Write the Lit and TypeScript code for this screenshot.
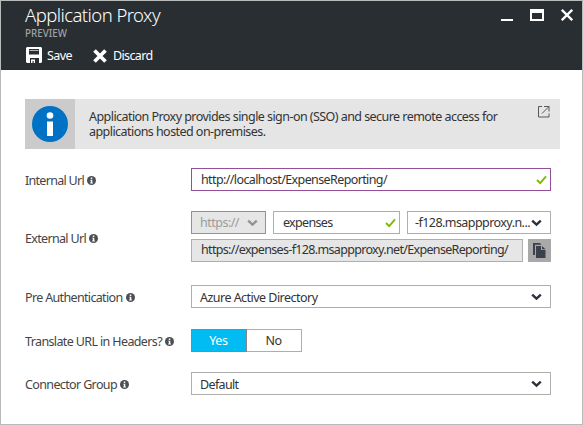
import { LitElement, html, css } from 'lit';
import { customElement, property } from 'lit/decorators.js';

/** Text whose tracking is adjusted so that its unwrapped length is a given width. */
@customElement('fit-text')
class FitText extends LitElement {
  @property({ type: Number }) width = 0;
  @property() text = '';
  @property({ type: Boolean, reflect: true }) wrap = false;

  static styles = css`
    :host { display: block; flex: none; }
    span { display: inline-block; white-space: pre; }
    :host([wrap]) span.fitted { white-space: normal; }
  `;

  firstUpdated() {
    const span = this.renderRoot.querySelector('span') as HTMLElement;
    const natural = span.getBoundingClientRect().width;
    const spacing = (this.width - natural) / this.text.length;
    span.style.letterSpacing = `${spacing.toFixed(3)}px`;
    span.classList.add('fitted');
  }

  render() {
    return html`<span>${this.text}</span>`;
  }
}

const t = (text: string, width: number, wrap = false) =>
  html`<fit-text .text=${text} .width=${width} .wrap=${wrap}></fit-text>`;

const chevron = html`<svg class="chevron" width="11" height="8" viewBox="0 0 11 8">
  <path d="M1.2 1.6 5.5 5.6 9.8 1.6" fill="none" stroke="currentColor" stroke-width="2.4" />
</svg>`;

const check = html`<svg class="check" width="11" height="10" viewBox="0 0 11 10">
  <path d="M1 5 4.2 8.2 10 1.3" fill="none" stroke="#7fba00" stroke-width="1.9" />
</svg>`;

const hint = html`<svg class="hint" width="9" height="9" viewBox="0 0 9 9">
  <circle cx="4.5" cy="4.5" r="4.5" fill="#4c4f54" />
  <path d="M3.8 1.5h1.5v1.4H3.8zM3.3 3.7h2v2.9h.6v.8H3.2v-.8h.6V4.5h-.5z" fill="#fff" />
</svg>`;

@customElement('app-root')
class AppRoot extends LitElement {
  static styles = css`
    :host {
      display: block;
      font: 12.5px/15px "Noto Sans", "Open Sans", sans-serif;
      color: #333;
    }
    * { box-sizing: border-box; }
    svg { display: block; flex: none; }
    .blade {
      width: 583px; height: 425px;
      border: 1px solid #b9bbbb;
      background: #fff;
      overflow: hidden;
    }
    header {
      height: 69px;
      background: #292e32;
      color: #fff;
      display: flex;
      justify-content: space-between;
      padding: 2px 9px 0 24px;
    }
    .title { font-size: 18.5px; line-height: 24px; font-weight: 300; }
    .sub { font-size: 9.8px; line-height: 12px; font-weight: 500; color: #a0a2a4; margin-top: 1px; }
    .commands { display: flex; align-items: center; margin-top: 7px; height: 17px; }
    .commands .save { margin: 0 4px 0 1px; }
    .commands .discard { margin: 0 6px 0 21px; }
    .window { display: flex; align-items: flex-start; padding-top: 6px; }
    .max { margin: 0 17px; }
    .banner {
      display: flex;
      width: 535px; height: 50px;
      margin: 29px 0 0 24px;
      background: #e5e5e5;
    }
    .badge {
      width: 50px;
      background: #cbcbcb;
      display: grid;
      place-items: center;
    }
    .message { padding: 10px 0 0 14px; margin-right: 19px; width: 443px; }
    .message fit-text { width: 429px; }
    .open { margin: 7px 0 0 1px; }
    .row { display: flex; margin-left: 24px; }
    .label {
      width: 166px;
      display: flex;
      align-items: center;
      color: #444;
      height: 23px;
      padding-top: 2px;
    }
    .hint { margin: 0 0 1px 3px; }
    .field {
      height: 23px;
      border: 1px solid #aeaeae;
      background: #fff;
      display: flex;
      align-items: center;
      justify-content: space-between;
      padding: 0 8px;
    }
    .wide { width: 360px; }
    .input { padding: 0 3px 1px 9px; }
    .valid { border-color: #954f99; }
    .internal { margin-top: 19px; }
    .external { margin-top: 20px; }
    .external .label { height: 51px; padding-top: 4px; }
    .stack { display: flex; flex-direction: column; gap: 5px; }
    .line { display: flex; }
    .scheme { width: 75px; background: #e6e6e6; border-color: #929292; color: #9b9b9b; }
    .name { width: 127px; margin: 0 7px; padding: 0 3px 1px 9px; }
    .check { margin-top: 2px; }
    .suffix { width: 144px; padding-left: 7px; }
    .readonly { width: 332px; background: #e6e6e6; margin-right: 5px; padding-bottom: 2px; }
    .copy { width: 23px; height: 23px; background: #a9a9a9; display: grid; place-items: center; }
    .chevron { color: #2b303a; }
    .scheme .chevron { color: #929292; margin-right: -1px; }
    .auth { margin-top: 23px; }
    .auth .field, .group .field { padding-top: 1px; }
    .translate { margin-top: 21px; }
    .group { margin-top: 20px; }
    .toggle { display: flex; }
    .toggle > div {
      height: 23px;
      border: 1px solid #aeaeae;
      display: flex;
      align-items: center;
      justify-content: center;
    }
    .toggle .on { width: 56px; background: #00bcf2; border-color: #858585; color: #fff; padding-right: 1px; }
    .toggle .off { width: 55px; border-left: 0; padding-right: 1px; }
  `;

  render() {
    return html`
      <div class="blade">
        <header>
          <div>
            <div class="title">${t('Application Proxy', 135)}</div>
            <div class="sub">${t('PREVIEW', 42)}</div>
            <div class="commands">
              <svg class="save" width="17" height="17" viewBox="0 0 17 17">
                <path fill="#fff" fill-rule="evenodd"
                  d="M1 0h14l1 1v14l-1 1h-2v-5H4v5H1l-1-1V1zM3 2v5.500h10V2zM5 12.500h4V16H7.700v-2H6.500v2H5z" />
                <path d="M3.500 3.500h9" stroke="#b8babb" stroke-width="1" />
              </svg>
              ${t('Save', 25)}
              <svg class="discard" width="14" height="14" viewBox="0 0 14 14">
                <path d="M1.500 1.500 12.500 12.500M12.500 1.500 1.500 12.500" stroke="#fff" stroke-width="3.700" />
              </svg>
              ${t('Discard', 39.5)}
            </div>
          </div>
          <div class="window">
            <svg width="12" height="12" viewBox="0 0 12 12"><path d="M0 10h12v2H0z" fill="#fff" /></svg>
            <svg class="max" width="14" height="12" viewBox="0 0 14 12">
              <path d="M0 0h14v12H0zM2 4v6h10V4z" fill="#fff" fill-rule="evenodd" />
            </svg>
            <svg width="12" height="12" viewBox="0 0 12 12">
              <path d="M.8.8 11.200 11.200M11.200.8.8 11.200" stroke="#fff" stroke-width="2.300" />
            </svg>
          </div>
        </header>

        <div class="banner">
          <div class="badge">
            <svg width="36" height="36" viewBox="0 0 36 36">
              <circle cx="18" cy="18" r="18" fill="#0072c6" />
              <circle cx="18" cy="9.500" r="3.300" fill="#fff" />
              <path d="M15 15.500h6V30h-6z" fill="#fff" />
            </svg>
          </div>
          <div class="message">
            ${t('Application Proxy provides single sign-on (SSO) and secure remote access for applications hosted on-premises.', 587.5, true)}
          </div>
          <svg class="open" width="12" height="12" viewBox="0 0 12 12">
            <path d="M4 .5H.5v10.500h10.500V7.500M6 .5h5v5M11 .5 4 7.500" fill="none" stroke="#55585c" />
          </svg>
        </div>

        <div class="row internal">
          <div class="label">${t('Internal Url', 59)}${hint}</div>
          <div class="field input wide valid">${t('http://localhost/ExpenseReporting/', 186)}${check}</div>
        </div>

        <div class="row external">
          <div class="label">${t('External Url', 61)}${hint}</div>
          <div class="stack">
            <div class="line">
              <div class="field scheme">${t('https://', 39)}${chevron}</div>
              <div class="field name">${t('expenses', 49.5)}${check}</div>
              <div class="field suffix">${t('-f128.msappproxy.n...', 115)}${chevron}</div>
            </div>
            <div class="line">
              <div class="field input readonly">${t('https://expenses-f128.msappproxy.net/ExpenseReporting/', 307)}</div>
              <div class="copy">
                <svg width="13" height="15" viewBox="0 0 13 15">
                  <path d="M0 0h7l1.500 1.800H2V12H0z" fill="#3b414c" />
                  <path d="M3 3h5v4h4.500v8H3zM9 3l3.500 3.200H9z" fill="#3b414c" />
                </svg>
              </div>
            </div>
          </div>
        </div>

        <div class="row auth">
          <div class="label">${t('Pre Authentication', 97.5)}${hint}</div>
          <div class="field wide">${t('Azure Active Directory', 117.5)}${chevron}</div>
        </div>

        <div class="row translate">
          <div class="label">${t('Translate URL in Headers?', 137)}${hint}</div>
          <div class="toggle">
            <div class="on">${t('Yes', 18.5)}</div>
            <div class="off">${t('No', 16)}</div>
          </div>
        </div>

        <div class="row group">
          <div class="label">${t('Connector Group', 92)}${hint}</div>
          <div class="field wide">${t('Default', 38.5)}${chevron}</div>
        </div>
      </div>
    `;
  }
}
